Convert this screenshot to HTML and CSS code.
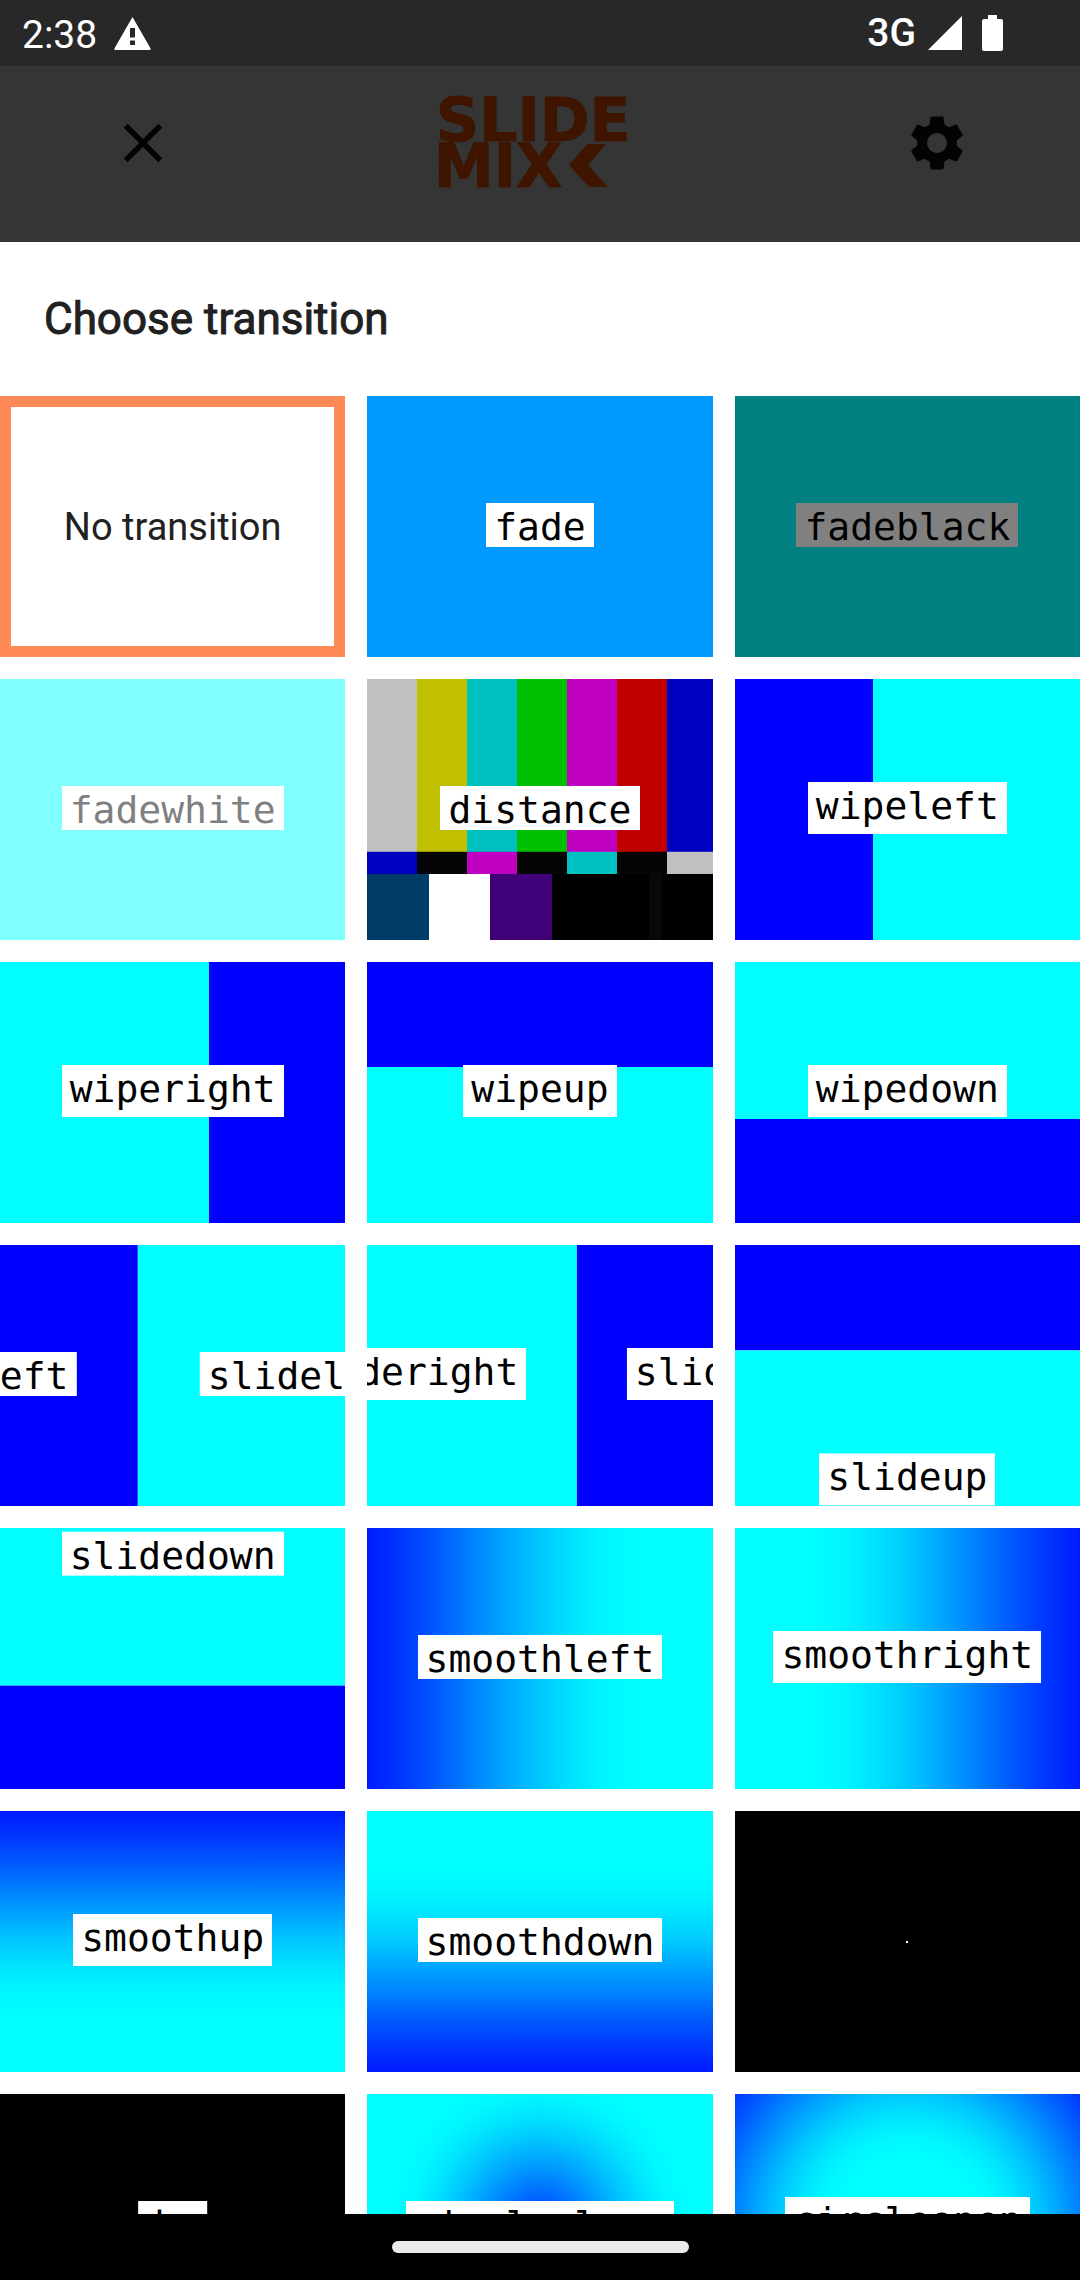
FILE: index.html
```html
<!DOCTYPE html>
<html lang="en">
<head>
<meta charset="utf-8">
<meta name="viewport" content="width=device-width, initial-scale=1">
<title>Slide Mix</title>
<link rel="stylesheet" href="styles.css">
</head>
<body>
<div class="status">
  <div class="status-group">
    <span class="clock">2:38</span>
    <svg class="icon-warning" viewBox="0 0 37 33" aria-hidden="true"><path fill-rule="evenodd" d="M18.5 0 L36.6 31.4 Q37 33 35.5 33 H1.5 Q0 33 .4 31.4 Z M16 11 V20.500 H21 V11 Z M16 23.500 V28 H21 V23.500 Z"/></svg>
  </div>
  <div class="status-group status-right">
    <span class="network">3G</span>
    <svg class="icon-signal" viewBox="0 0 34 34" aria-hidden="true"><path d="M0 34 L34 0 V34 Z"/></svg>
    <svg class="icon-battery" viewBox="0 0 21 36" aria-hidden="true"><path d="M6 0 H15 V4 H19 Q21 4 21 6 V34 Q21 36 19 36 H2 Q0 36 0 34 V6 Q0 4 2 4 H6 Z"/></svg>
  </div>
</div>
<header class="bar">
  <button class="icon-button" type="button" aria-label="Close">
    <svg viewBox="0 0 24 24"><path d="M19 6.410 17.590 5 12 10.590 6.410 5 5 6.410 10.590 12 5 17.590 6.410 19 12 13.410 17.590 19 19 17.590 13.410 12z"/></svg>
  </button>
  <svg class="logo" viewBox="0 0 204 88" role="img" aria-label="Slide Mix">
    <text x="-2" y="42">SLIDE</text>
    <text x="-4" y="88">MIX</text>
    <path d="M149 45 H168 L150 66 L170 88 H151 L131 66 Z"/>
  </svg>
  <button class="icon-button" type="button" aria-label="Settings">
    <svg viewBox="0 0 24 24"><path d="M19.140 12.940c.04-.3.06-.61.06-.94 0-.32-.02-.64-.07-.94l2.030-1.580c.18-.14.23-.41.12-.61l-1.920-3.320c-.12-.22-.37-.29-.59-.22l-2.390.96c-.5-.38-1.030-.7-1.620-.94l-.36-2.540c-.04-.24-.24-.41-.48-.41h-3.840c-.24 0-.43.17-.47.41l-.36 2.540c-.59.24-1.130.57-1.620.94l-2.390-.96c-.22-.08-.47 0-.59.22L2.740 8.870c-.12.21-.08.47.12.61l2.030 1.580c-.05.3-.09.63-.09.94s.02.64.07.94l-2.030 1.580c-.18.14-.23.41-.12.61l1.920 3.320c.12.22.37.29.59.22l2.390-.96c.5.38 1.030.7 1.620.94l.36 2.540c.05.24.24.41.48.41h3.840c.24 0 .44-.17.47-.41l.36-2.540c.59-.24 1.130-.56 1.620-.94l2.390.96c.22.08.47 0 .59-.22l1.920-3.320c.12-.22.07-.47-.12-.61l-2.010-1.580zM12 15.600c-1.980 0-3.600-1.620-3.600-3.600s1.620-3.600 3.600-3.600 3.600 1.620 3.600 3.600-1.620 3.600-3.600 3.600z"/></svg>
  </button>
</header>
<main class="sheet">
  <h1 class="title">Choose transition</h1>
  <div class="grid">
    <button class="tile selected" type="button">No transition</button>
    <button class="tile fade" type="button"><span class="label">fade</span></button>
    <button class="tile fadeblack" type="button"><span class="label">fadeblack</span></button>

    <button class="tile fadewhite" type="button"><span class="label">fadewhite</span></button>
    <button class="tile distance" type="button"><span class="label">distance</span></button>
    <button class="tile wipeleft" type="button"><span class="label tall">wipeleft</span></button>

    <button class="tile wiperight" type="button"><span class="label tall">wiperight</span></button>
    <button class="tile wipeup" type="button"><span class="label tall">wipeup</span></button>
    <button class="tile wipedown" type="button"><span class="label tall">wipedown</span></button>

    <button class="tile sliding" type="button">
      <span class="strip slideleft">
        <span class="frame blue"><span class="label">slideleft</span></span>
        <span class="frame cyan"><span class="label">slideleft</span></span>
      </span>
    </button>
    <button class="tile sliding" type="button">
      <span class="strip slideright">
        <span class="frame cyan"><span class="label tall">slideright</span></span>
        <span class="frame blue"><span class="label tall">slideright</span></span>
      </span>
    </button>
    <button class="tile sliding" type="button">
      <span class="strip vertical slideup">
        <span class="frame blue"></span>
        <span class="frame cyan"><span class="label tall">slideup</span></span>
      </span>
    </button>

    <button class="tile sliding" type="button">
      <span class="strip vertical slidedown">
        <span class="frame cyan"><span class="label">slidedown</span></span>
        <span class="frame blue"></span>
      </span>
    </button>
    <button class="tile smoothleft" type="button"><span class="label">smoothleft</span></button>
    <button class="tile smoothright" type="button"><span class="label tall">smoothright</span></button>

    <button class="tile smoothup" type="button"><span class="label tall">smoothup</span></button>
    <button class="tile smoothdown" type="button"><span class="label">smoothdown</span></button>
    <button class="tile crop" type="button" aria-label="circlecrop"><span class="dot"></span></button>

    <button class="tile crop" type="button"><span class="frame window"><span class="label tall">rectcrop</span></span></button>
    <button class="tile circleclose" type="button"><span class="label">circleclose</span></button>
    <button class="tile circleopen" type="button"><span class="label tall">circleopen</span></button>
  </div>
</main>
<div class="gesture"><span class="pill"></span></div>
</body>
</html>
```

FILE: styles.css
```css
* {
  box-sizing: border-box;
}

body {
  margin: 0;
  height: 100vh;
  display: flex;
  flex-direction: column;
  overflow: hidden;
  background: #fff;
  color: #212121;
  font-family: Roboto, "Liberation Sans", sans-serif;
}

button {
  margin: 0;
  padding: 0;
  border: 0;
  background: none;
  font: inherit;
  color: inherit;
}

/* System status bar */
.status {
  flex: none;
  height: 66px;
  padding: 0 77px 0 22px;
  display: flex;
  align-items: center;
  justify-content: space-between;
  background: #282828;
  color: #fff;
  fill: #fff;
}

.status-group {
  display: flex;
  align-items: center;
  gap: 17px;
}

.status-right {
  gap: 20px;
}

.clock {
  font-size: 39px;
  line-height: 64px;
  padding-top: 4px;
}

.network {
  font-size: 39px;
  line-height: 64px;
  font-weight: 500;
  margin-right: -8px;
}

.icon-warning {
  width: 37px;
  height: 33px;
}

.icon-signal {
  width: 34px;
  height: 34px;
}

.icon-battery {
  width: 21px;
  height: 36px;
}

/* Dimmed app bar */
.bar {
  flex: none;
  height: 176px;
  padding: 0 110px 22px;
  display: flex;
  align-items: center;
  justify-content: space-between;
  background: #353535;
}

.icon-button {
  width: 66px;
  height: 66px;
}

.icon-button svg {
  display: block;
  width: 100%;
  height: 100%;
  fill: #030303;
}

.logo {
  width: 204px;
  height: 88px;
  overflow: visible;
  fill: #3f1500;
}

.logo text {
  font-family: "DejaVu Sans", sans-serif;
  font-size: 60px;
  font-weight: 700;
  stroke: #3f1500;
  stroke-width: 1px;
}

/* Bottom sheet */
.sheet {
  flex: 1;
  min-height: 0;
  overflow: hidden;
  background: #fff;
}

.title {
  margin: 0;
  padding: 47px 44px;
  font-size: 44px;
  line-height: 60px;
  font-weight: 400;
  -webkit-text-stroke: 1px currentColor;
}

.grid {
  display: grid;
  grid-template-columns: repeat(3, minmax(0, 1fr));
  gap: 22px;
}

.tile {
  display: grid;
  place-items: center;
  aspect-ratio: 172 / 130;
  padding-bottom: 4px;
  overflow: hidden;
  font-size: 38px;
}

.selected {
  padding: 0;
  border: 11px solid #ff8a57;
}

.label {
  padding: 4px 8px 0;
  background: #fff;
  color: #000;
  font-family: "DejaVu Sans Mono", monospace;
  font-size: 38px;
  line-height: 40px;
}

.tall {
  padding-bottom: 8px;
}

.fade {
  background: #0099ff;
}

.fadeblack {
  background: #008080;
}

.fadeblack .label {
  background: #808080;
}

.fadewhite {
  background: #80ffff;
}

.fadewhite .label {
  color: #808080;
}

/* Test card: seven bars, castellations, then the lower blocks */
.distance {
  background:
    linear-gradient(90deg, #c0c0c0 14.4%, #c0c000 0 28.9%, #00c0c0 0 43.4%, #00c000 0 57.8%, #c000c0 0 72.2%, #c00000 0 86.6%, #0000c0 0) 0 0 / 100% 66.2% no-repeat,
    linear-gradient(90deg, #0000c0 14.4%, #050505 0 28.9%, #c000c0 0 43.4%, #050505 0 57.8%, #00c0c0 0 72.2%, #050505 0 86.6%, #c0c0c0 0) 0 0 / 100% 74.9% no-repeat,
    linear-gradient(90deg, #003e67 17.8%, #fff 0 35.6%, #400077 0 53.4%, #000 0 81.5%, #080808 0 85.4%, #000 0);
}

.wipeleft {
  background: linear-gradient(90deg, #00f 40%, #0ff 0);
}

.wiperight {
  background: linear-gradient(90deg, #0ff 60.5%, #00f 0);
}

.wipeup {
  background: linear-gradient(#00f 40.3%, #0ff 0);
}

.wipedown {
  background: linear-gradient(#0ff 60.2%, #00f 0);
}

/* Slides: a strip of two frames moved under the tile */
.sliding {
  grid-template: 100% / 100%;
  place-items: start;
  padding: 0;
}

.strip {
  display: grid;
  width: 200%;
  height: 100%;
  grid-template-columns: 50% 50%;
}

.vertical {
  width: 100%;
  height: 200%;
  grid-template-columns: 100%;
  grid-template-rows: 50% 50%;
}

.frame {
  display: grid;
  place-items: center;
  width: 100%;
  height: 100%;
  padding-bottom: 4px;
}

.blue {
  background: #00f;
}

.cyan {
  background: #0ff;
}

.slideleft {
  transform: translateX(-30%);
}

.slideright {
  transform: translateX(-19.7%);
}

.slideup {
  transform: translateY(-29.8%);
}

.slidedown {
  transform: translateY(-19.8%);
}

.smoothleft,
.smoothright,
.smoothup,
.smoothdown {
  background: linear-gradient(var(--to), rgb(0 26 255), rgb(0 55 255) 10%, rgb(0 90 255) 20%, rgb(0 128 255) 30%, rgb(0 165 255) 40%, rgb(0 200 255) 50%, rgb(0 228 255) 60%, rgb(0 248 255) 70%, #0ff 80%);
}

.smoothleft {
  --to: to right;
}

.smoothright {
  --to: to left;
}

.smoothup {
  --to: to bottom;
}

.smoothdown {
  --to: to top;
}

.crop {
  padding: 0;
  background: #000;
}

.dot {
  width: 2px;
  height: 2px;
  background: #fff;
}

.window {
  padding: 0;
  clip-path: inset(41% 40%);
}

.circleclose {
  background: radial-gradient(circle, rgb(0 55 255), rgb(0 90 255) 10%, rgb(0 128 255) 20%, rgb(0 165 255) 30%, rgb(0 200 255) 40%, rgb(0 228 255) 50%, rgb(0 248 255) 60%, #0ff 70%);
}

.circleopen {
  background: radial-gradient(circle, #0ff 30%, rgb(0 248 255) 40%, rgb(0 228 255) 50%, rgb(0 200 255) 60%, rgb(0 165 255) 70%, rgb(0 128 255) 80%, rgb(0 90 255) 90%, rgb(0 55 255));
}

/* System gesture bar */
.gesture {
  flex: none;
  height: 66px;
  display: flex;
  align-items: center;
  justify-content: center;
  background: #000;
}

.pill {
  width: 297px;
  height: 12px;
  border-radius: 6px;
  background: #ebebeb;
}
```
